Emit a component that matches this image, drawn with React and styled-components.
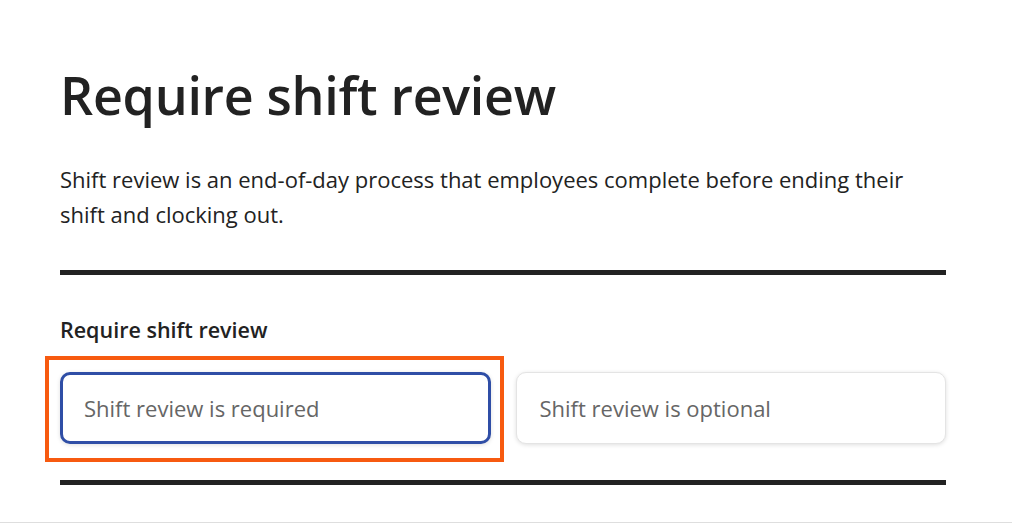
import React from "react";
import styled, { createGlobalStyle } from "styled-components";

const Global = createGlobalStyle`
  html, body { margin: 0; padding: 0; background: #fff; }
  body { font-family: "Open Sans", "Liberation Sans", sans-serif; color: #222; }
`;

const Page = styled.div`
  height: 522px;
  border-bottom: 1px solid #dedede;
`;

const Content = styled.main`
  width: 886px;
  padding: 65px 0 0 60px;
`;

const Title = styled.h1`
  margin: 0;
  font-size: 52px;
  line-height: 60px;
  font-weight: 600;
  letter-spacing: -0.3px;
`;

const Lead = styled.p`
  margin: 37px 0 0;
  max-width: 870px;
  font-size: 22px;
  line-height: 35px;
`;

const Rule = styled.hr`
  margin: ${(p) => p.$mt}px 0 0;
  border: 0;
  height: 5px;
  background: #222;
`;

const Group = styled.section`
  margin-top: 41px;
`;

const GroupLabel = styled.div`
  font-size: 21.5px;
  font-weight: 600;
  line-height: 27px;
`;

const Options = styled.div`
  display: grid;
  grid-template-columns: 1fr 1fr;
  gap: 25px;
  margin-top: 29px;
`;

const Option = styled.button`
  position: relative;
  height: 72px;
  box-sizing: border-box;
  text-align: left;
  font-family: inherit;
  font-size: 22px;
  color: #666;
  background: #fff;
  border-radius: 10px;
  border: ${(p) => (p.$selected ? "3px solid #2f4ea6" : "1px solid #e4e4e4")};
  padding: 0 0 0 ${(p) => (p.$selected ? 21 : 23)}px;
  box-shadow: 0 1px 4px rgba(0, 0, 0, 0.13);
  cursor: pointer;

  &::after {
    content: "";
    display: ${(p) => (p.$highlight ? "block" : "none")};
    position: absolute;
    top: -19px;
    left: -18px;
    right: -16px;
    bottom: -21px;
    border: 4px solid #f75a10;
    pointer-events: none;
  }
`;

export default function App() {
  return (
    <>
      <Global />
      <Page>
        <Content>
          <Title>Require shift review</Title>
          <Lead>
            Shift review is an end-of-day process that employees complete before ending their
            shift and clocking out.
          </Lead>
          <Rule $mt={38} />
          <Group role="radiogroup" aria-label="Require shift review">
            <GroupLabel>Require shift review</GroupLabel>
            <Options>
              <Option $selected $highlight>Shift review is required</Option>
              <Option>Shift review is optional</Option>
            </Options>
          </Group>
          <Rule $mt={36} />
        </Content>
      </Page>
    </>
  );
}
